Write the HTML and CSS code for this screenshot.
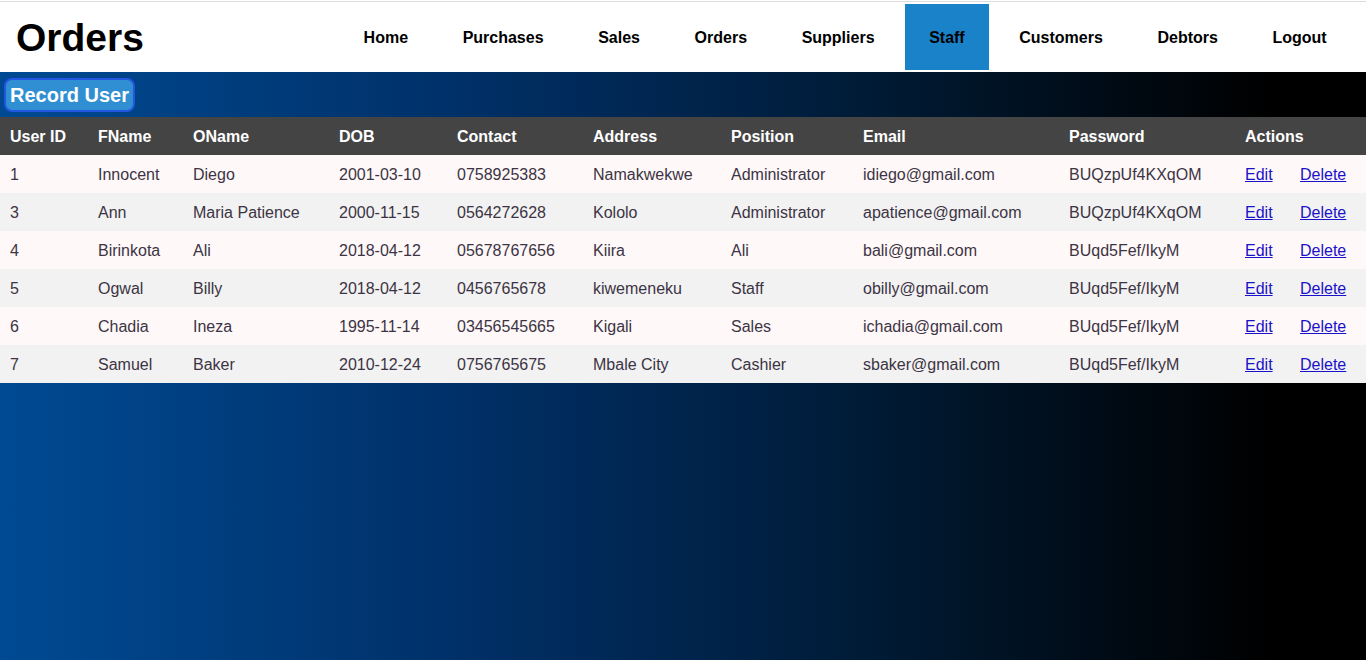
FILE: index.html
```html
<!DOCTYPE html>
<html>
<head>
<meta charset="utf-8">
<title>Orders</title>
<link rel="stylesheet" href="styles.css">
</head>
<body>
<header class="topbar">
  <h1 class="brand">Orders</h1>
  <nav class="nav">
    <a href="#">Home</a>
    <a href="#">Purchases</a>
    <a href="#">Sales</a>
    <a href="#">Orders</a>
    <a href="#">Suppliers</a>
    <a href="#" class="active">Staff</a>
    <a href="#">Customers</a>
    <a href="#">Debtors</a>
    <a href="#">Logout</a>
  </nav>
</header>
<main class="content">
  <div class="toolbar"><button class="btn">Record User</button></div>
  <table class="users">
    <colgroup>
      <col style="width:88px"><col style="width:95px"><col style="width:146px"><col style="width:118px"><col style="width:136px"><col style="width:138px"><col style="width:132px"><col style="width:206px"><col style="width:176px"><col style="width:55px"><col>
    </colgroup>
    <thead>
      <tr><th>User ID</th><th>FName</th><th>OName</th><th>DOB</th><th>Contact</th><th>Address</th><th>Position</th><th>Email</th><th>Password</th><th colspan="2">Actions</th></tr>
    </thead>
    <tbody>
      <tr><td>1</td><td>Innocent</td><td>Diego</td><td>2001-03-10</td><td>0758925383</td><td>Namakwekwe</td><td>Administrator</td><td>idiego@gmail.com</td><td>BUQzpUf4KXqOM</td><td><a href="#">Edit</a></td><td><a href="#">Delete</a></td></tr>
      <tr><td>3</td><td>Ann</td><td>Maria Patience</td><td>2000-11-15</td><td>0564272628</td><td>Kololo</td><td>Administrator</td><td>apatience@gmail.com</td><td>BUQzpUf4KXqOM</td><td><a href="#">Edit</a></td><td><a href="#">Delete</a></td></tr>
      <tr><td>4</td><td>Birinkota</td><td>Ali</td><td>2018-04-12</td><td>05678767656</td><td>Kiira</td><td>Ali</td><td>bali@gmail.com</td><td>BUqd5Fef/IkyM</td><td><a href="#">Edit</a></td><td><a href="#">Delete</a></td></tr>
      <tr><td>5</td><td>Ogwal</td><td>Billy</td><td>2018-04-12</td><td>0456765678</td><td>kiwemeneku</td><td>Staff</td><td>obilly@gmail.com</td><td>BUqd5Fef/IkyM</td><td><a href="#">Edit</a></td><td><a href="#">Delete</a></td></tr>
      <tr><td>6</td><td>Chadia</td><td>Ineza</td><td>1995-11-14</td><td>03456545665</td><td>Kigali</td><td>Sales</td><td>ichadia@gmail.com</td><td>BUqd5Fef/IkyM</td><td><a href="#">Edit</a></td><td><a href="#">Delete</a></td></tr>
      <tr><td>7</td><td>Samuel</td><td>Baker</td><td>2010-12-24</td><td>0756765675</td><td>Mbale City</td><td>Cashier</td><td>sbaker@gmail.com</td><td>BUqd5Fef/IkyM</td><td><a href="#">Edit</a></td><td><a href="#">Delete</a></td></tr>
    </tbody>
  </table>
</main>
</body>
</html>
```
FILE: styles.css
```css
html, body {
  margin: 0;
  padding: 0;
  height: 100%;
}
body {
  font-family: "Liberation Sans", Arial, sans-serif;
  background: linear-gradient(to right, #004a93 0%, #002f66 35%, #001a33 65%, #000000 93%);
  min-height: 660px;
}
.topbar {
  background: linear-gradient(#ffffff 0 1px, #dcdcdc 1px 2px, #ffffff 2px);
  height: 72px;
  display: flex;
  align-items: flex-start;
  justify-content: space-between;
}
.brand {
  margin: 0;
  padding: 16px 0 0 16px;
  font-size: 39px;
  line-height: 44px;
  font-weight: bold;
  color: #000;
}
.nav {
  display: flex;
  margin-top: 4px;
  margin-right: 12px;
}
.nav a {
  display: block;
  height: 66px;
  line-height: 68px;
  padding: 0 27.3px;
  font-size: 16px;
  font-weight: bold;
  color: #000;
  text-decoration: none;
}
.nav a.active {
  background: #1a82c9;
  padding: 0 24.3px;
  margin: 0 3px;
}
.toolbar {
  padding: 6px 0 5px 4px;
  height: 34px;
}
.btn {
  font-family: "Liberation Sans", Arial, sans-serif;
  font-size: 20px;
  font-weight: bold;
  color: #fff;
  background: #2f8fd2;
  border: 2px solid #2255e0;
  border-radius: 8px;
  height: 34px;
  padding: 0 4px;
  line-height: 28px;
}
.users {
  width: 100%;
  border-collapse: collapse;
  table-layout: fixed;
  font-size: 16px;
}
.users th {
  background: #444444;
  color: #fff;
  font-weight: bold;
  text-align: left;
  height: 36px;
  padding: 2px 10px 0;
}
.users td {
  height: 36px;
  padding: 2px 10px 0;
  color: #3c3444;
  white-space: nowrap;
}
.users tbody tr:nth-child(odd) td {
  background: #fff8f8;
}
.users tbody tr:nth-child(even) td {
  background: #f2f2f2;
}
.users a {
  color: #1a12c8;
  text-decoration: underline;
}
```
